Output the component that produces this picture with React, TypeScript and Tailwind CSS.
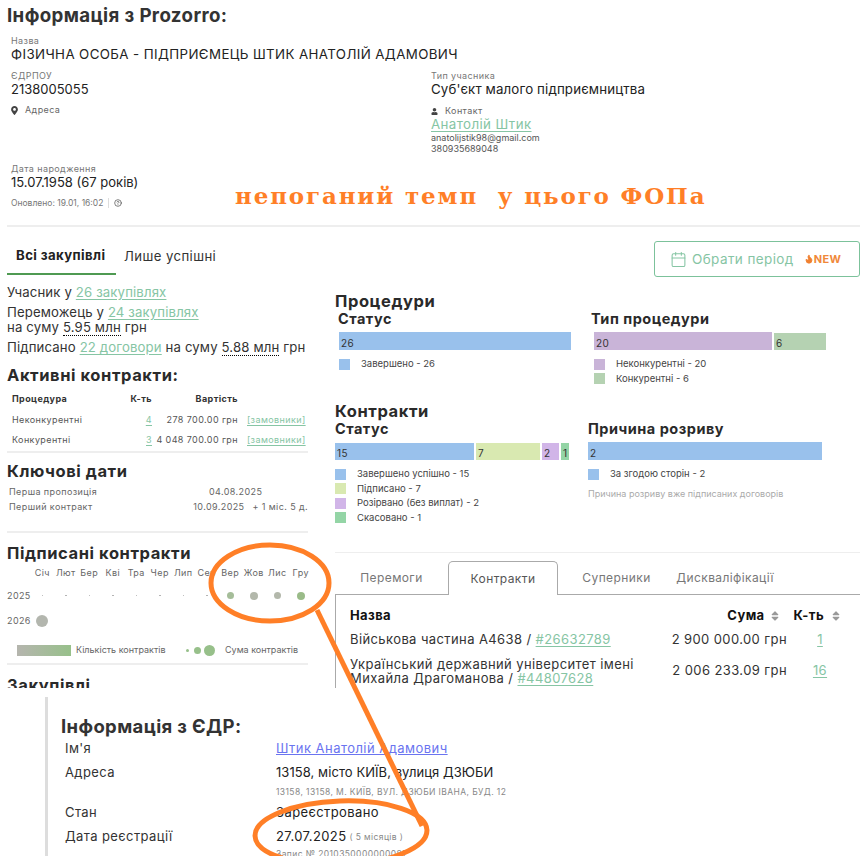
import { Calendar, CircleHelp, Flame } from "lucide-react"
import { FaMapMarkerAlt, FaUser, FaSort } from "react-icons/fa"

const linkCls = "text-[#86c5a4] underline underline-offset-2"
const h3Cls = "text-[16.5px] leading-[20px] font-bold text-[#2a2a2a] tracking-[0.035em]"
const h4Cls = "text-[14.5px] leading-[18px] font-bold text-[#2a2a2a] tracking-[0.035em]"

function Bar({ items }: { items: { n: string; w: string; c: string }[] }) {
  return (
    <div className="flex items-end gap-[2px]">
      {items.map((it, i) => (
        <div key={i} className={`${it.w} ${it.c} flex items-end pl-[2px] text-[10px] leading-[14px] text-[#333]`}>
          {it.n}
        </div>
      ))}
    </div>
  )
}

function Legend({ c, label }: { c: string; label: string }) {
  return (
    <div className="flex items-center h-[14.5px] text-[9.5px] text-[#444] tracking-normal">
      <span className={`w-[11px] h-[11px] ${c} mr-[11px]`} />
      {label}
    </div>
  )
}

const months = ["Січ", "Лют", "Бер", "Кві", "Тра", "Чер", "Лип", "Сер", "Вер", "Жов", "Лис", "Гру"]

function Dot({ s, c }: { s: string; c: string }) {
  return (
    <div className="flex items-center justify-center">
      <span className={`${s} ${c} rounded-full block`} />
    </div>
  )
}

function LeftColumn() {
  return (
    <div className="w-[301px] shrink-0 text-[#333]">
      <div className="flex h-[48px] text-[13.2px]">
        <div className="w-[109px] h-[48px] border-b-2 border-[#4f9a52] flex items-center pt-[12px] pl-[9px] font-bold text-[#222]">Всі закупівлі</div>
        <div className="h-[48px] flex items-center pt-[12px] pl-[8px] text-[#333]">Лише успішні</div>
      </div>
      <div className="mt-[10px] text-[13.2px] leading-[15px] tracking-[0.01em]">
        <p className="h-[20px]">Учасник у <a className={linkCls}>26 закупівлях</a></p>
        <p>Переможець у <a className={linkCls}>24 закупівлях</a></p>
        <p className="h-[20px]">на суму <span className="border-b border-dotted border-black">5.95 млн</span> грн</p>
        <p className="whitespace-nowrap">Підписано <a className={linkCls}>22 договори</a> на суму <span className="border-b border-dotted border-black">5.88 млн</span> грн</p>
      </div>
      <h3 className={`mt-[10px] ${h3Cls}`}>Активні контракти:</h3>
      <div className="mt-[3px] text-[9px] text-[#555] pb-[1px] border-b-2 border-[#eee]">
        <div className="flex h-[22px] items-center font-bold text-[#333]">
          <span className="w-[107px] pl-[5px]">Процедура</span>
          <span className="w-[38px] text-right">К-ть</span>
          <span className="w-[86px] text-right">Вартість</span>
        </div>
        <div className="flex h-[20px] items-center">
          <span className="w-[107px] pl-[5px]">Неконкурентні</span>
          <span className="w-[38px] text-right"><a className={linkCls}>4</a></span>
          <span className="w-[86px] text-right">278 700.00 грн</span>
          <a className={`ml-[9px] ${linkCls}`}>[замовники]</a>
        </div>
        <div className="flex h-[20px] items-center">
          <span className="w-[107px] pl-[5px]">Конкурентні</span>
          <span className="w-[38px] text-right"><a className={linkCls}>3</a></span>
          <span className="w-[86px] text-right">4 048 700.00 грн</span>
          <a className={`ml-[9px] ${linkCls}`}>[замовники]</a>
        </div>
      </div>
      <h3 className={`mt-[8px] ${h3Cls}`}>Ключові дати</h3>
      <div className="mt-[3px] text-[9px] text-[#666] pb-[17px] border-b-2 border-[#eee]">
        <div className="flex h-[15px] items-center">
          <span className="w-[202px] pl-[2px]">Перша пропозиція</span>
          <span>04.08.2025</span>
        </div>
        <div className="flex h-[15px] items-center whitespace-nowrap">
          <span className="w-[202px] pl-[2px]">Перший контракт</span>
          <span>10.09.2025</span>
          <span className="ml-[8px]">+ 1 міс. 5 д.</span>
        </div>
      </div>
      <h3 className={`mt-[10px] ${h3Cls}`}>Підписані контракти</h3>
      <div className="grid grid-cols-[23.5px_repeat(12,23.5px)] text-[9px] text-[#666]">
        <span />
        {months.map((m) => (
          <span key={m} className="h-[19px] flex items-center justify-center">{m}</span>
        ))}
        <span className="h-[27px] flex items-center">2025</span>
        {months.slice(0, 8).map((m) => (
          <Dot key={m} s="w-[1.5px] h-[1.5px]" c="bg-[#aaa]" />
        ))}
        <Dot s="w-[7px] h-[7px]" c="bg-[#a5bd99]" />
        <Dot s="w-[8px] h-[8px]" c="bg-[#b3b8ab]" />
        <Dot s="w-[7px] h-[7px]" c="bg-[#b3b8ab]" />
        <Dot s="w-[8px] h-[8px]" c="bg-[#9abb88]" />
        <span className="h-[23px] flex items-center">2026</span>
        <Dot s="w-[12px] h-[12px]" c="bg-[#b3b6ae]" />
      </div>
      <div className="mt-[11px] h-[14px] flex items-center text-[9px] text-[#666] pl-[10px] whitespace-nowrap tracking-normal">
        <span className="w-[54px] h-[11px] bg-gradient-to-r from-[#b5b5ae] to-[#97c08a] mr-[5px]" />
        <span className="w-[110px]">Кількість контрактів</span>
        <span className="w-[3px] h-[3px] rounded-full bg-[#97c08a] mr-[5px]" />
        <span className="w-[7px] h-[7px] rounded-full bg-[#97c08a] mr-[3px]" />
        <span className="w-[11px] h-[11px] rounded-full bg-[#97c08a] mr-[10px]" />
        Сума контрактів
      </div>
      <div className="mt-[6px] border-t-2 border-[#eee]" />
      <h3 className={`mt-[10px] ${h3Cls}`}>Закупівлі</h3>
    </div>
  )
}

function RightColumn() {
  return (
    <div className="flex-1 min-w-0 text-[#333]">
      <div className="flex justify-end">
        <button className="w-[206px] h-[36px] mt-[14px] border border-[#7cc29b] rounded-[3px] flex items-center pl-[15px] text-[13.5px] text-[#86c5a4] whitespace-nowrap">
          <Calendar className="w-[17px] h-[17px] mr-[5px]" strokeWidth={1.5} />
          Обрати період
          <Flame className="w-[10px] h-[10px] ml-[10px] text-[#f08030]" fill="#f08030" />
          <span className="text-[11px] font-bold text-[#f0883a]">NEW</span>
        </button>
      </div>
      <h3 className={`mt-[14px] ${h3Cls}`}>Процедури</h3>
      <div className="flex">
        <div className="w-[255px] pl-[3px]">
          <h4 className={`-mt-px ${h4Cls}`}>Статус</h4>
          <div className="mt-[4px] ml-[1px]">
            <Bar items={[{ n: "26", w: "w-[232px] h-[18px]", c: "bg-[#99c1ec]" }]} />
          </div>
          <div className="mt-[7px] ml-[1px]"><Legend c="bg-[#99c1ec]" label="Завершено - 26" /></div>
        </div>
        <div className="pl-[1px]">
          <h4 className={`-mt-px ${h4Cls}`}>Тип процедури</h4>
          <div className="mt-[4px] ml-[3px]">
            <Bar items={[
              { n: "20", w: "w-[178px] h-[18px]", c: "bg-[#c9b4d8]" },
              { n: "6", w: "w-[52px] h-[17px]", c: "bg-[#b5d2b2]" },
            ]} />
          </div>
          <div className="mt-[7px] ml-[3px]">
            <Legend c="bg-[#c9b4d8]" label="Неконкурентні - 20" />
            <Legend c="bg-[#b5d2b2]" label="Конкурентні - 6" />
          </div>
        </div>
      </div>
      <h3 className={`mt-[15px] ${h3Cls}`}>Контракти</h3>
      <div className="flex">
        <div className="w-[253px]">
          <h4 className={`-mt-px ${h4Cls}`}>Статус</h4>
          <div className="mt-[5px]">
            <Bar items={[
              { n: "15", w: "w-[139px] h-[17px]", c: "bg-[#99c1ec]" },
              { n: "7", w: "w-[64px] h-[17px]", c: "bg-[#d9e9b1]" },
              { n: "2", w: "w-[17px] h-[17px]", c: "bg-[#d1b5e8]" },
              { n: "1", w: "w-[8px] h-[17px]", c: "bg-[#94d5a6]" },
            ]} />
          </div>
          <div className="mt-[7px]">
            <Legend c="bg-[#99c1ec]" label="Завершено успішно - 15" />
            <Legend c="bg-[#d9e9b1]" label="Підписано - 7" />
            <Legend c="bg-[#d1b5e8]" label="Розірвано (без виплат) - 2" />
            <Legend c="bg-[#94d5a6]" label="Скасовано - 1" />
          </div>
        </div>
        <div>
          <h4 className={`-mt-px ${h4Cls}`}>Причина розриву</h4>
          <div className="mt-[4px]">
            <Bar items={[{ n: "2", w: "w-[234px] h-[18px]", c: "bg-[#99c1ec]" }]} />
          </div>
          <div className="mt-[7px]"><Legend c="bg-[#99c1ec]" label="За згодою сторін - 2" /></div>
          <p className="mt-[6px] text-[9px] leading-[12px] text-[#aaa] tracking-normal">Причина розриву вже підписаних договорів</p>
        </div>
      </div>
      <div className="mt-[27px] border-t border-[#eee]" />
      <div className="mt-[8px] flex text-[12px] text-[#777] h-[33px] border-b border-[#aaa] box-content">
        <div className="w-[113px] h-[33px] flex items-center justify-center">Перемоги</div>
        <div className="w-[110px] h-[34px] flex items-center justify-center bg-white border border-[#aaa] border-b-0 rounded-t-[5px] text-[#555]">Контракти</div>
        <div className="w-[117px] h-[33px] flex items-center justify-center">Суперники</div>
        <div className="w-[100px] h-[33px] flex items-center justify-center">Дискваліфікації</div>
      </div>
      <div className="border-l border-[#aaa] pl-[14px] pr-[7px] h-[100px] text-[13px] text-[#333]">
        <div className="flex h-[42px] items-center font-bold text-[#111] pr-[12px]">
          <span className="flex-1">Назва</span>
          <span className="mr-[5px]">Сума</span>
          <FaSort className="w-[10px] h-[12px] text-[#999] mr-[14px]" />
          <span className="mr-[7px]">К-ть</span>
          <FaSort className="w-[10px] h-[12px] text-[#999]" />
        </div>
        <div className="flex items-center -mt-[9px] h-[24px]">
          <span className="flex-1">Військова частина А4638 / <a className={linkCls}>#26632789</a></span>
          <span className="w-[140px] text-right whitespace-nowrap">2 900 000.00 грн</span>
          <span className="w-[66px] text-center"><a className={linkCls}>1</a></span>
        </div>
        <div className="flex items-center mt-[5px]">
          <span className="flex-1 leading-[14px] whitespace-nowrap">Український державний університет імені<br />Михайла Драгоманова / <a className={linkCls}>#44807628</a></span>
          <span className="w-[140px] text-right whitespace-nowrap">2 006 233.09 грн</span>
          <span className="w-[66px] text-center"><a className={linkCls}>16</a></span>
        </div>
      </div>
    </div>
  )
}

export default function App() {
  return (
    <div className="relative w-[865px] h-[856px] overflow-hidden bg-white font-['Inter',sans-serif] text-[#222] tracking-[0.025em]">
      <div className="h-[688px] overflow-hidden pl-[7px] pr-[5px]">
        <h2 className="pt-[5px] text-[18.7px] leading-[22px] font-bold text-[#333] tracking-[0.02em]">Інформація з Prozorro:</h2>
        <div className="border-b-2 border-[#eee] h-[200px] pt-[9px]">
          <div className="pl-[4px]">
            <div className="text-[9px] leading-[10px] text-[#777]">Назва</div>
            <div className="text-[13.3px] leading-[16px] text-[#222]">ФІЗИЧНА ОСОБА - ПІДПРИЄМЕЦЬ ШТИК АНАТОЛІЙ АДАМОВИЧ</div>
          </div>
          <div className="flex pl-[4px] mt-[9px]">
            <div className="w-[420px]">
              <div className="text-[9px] leading-[10px] text-[#777]">ЄДРПОУ</div>
              <div className="text-[13px] leading-[16px] tracking-normal">2138005055</div>
              <div className="flex items-center mt-[7px] text-[9px] leading-[12px] text-[#666]">
                <FaMapMarkerAlt className="w-[7px] h-[9px] text-[#444] mr-[7px]" />
                Адреса
              </div>
              <div className="mt-[48px] text-[9px] leading-[10px] text-[#777]">Дата народження</div>
              <div className="text-[13px] leading-[16px] tracking-normal">15.07.1958 (67 років)</div>
              <div className="flex items-center mt-[7px] text-[8.5px] leading-[12px] text-[#777] tracking-normal">
                Оновлено: 19.01, 16:02
                <span className="w-px h-[10px] bg-[#ddd] mx-[5px]" />
                <CircleHelp className="w-[8px] h-[8px] text-[#444]" />
              </div>
            </div>
            <div className="flex-1">
              <div className="text-[9px] leading-[10px] text-[#777]">Тип учасника</div>
              <div className="text-[13.3px] leading-[16px] text-[#222] tracking-[0.01em]">Суб'єкт малого підприємництва</div>
              <div className="flex items-center mt-[8px] text-[9px] leading-[12px] text-[#666]">
                <FaUser className="w-[7px] h-[7px] text-[#444] mr-[7px]" />
                Контакт
              </div>
              <a className={`block text-[13.3px] leading-[15px] ${linkCls}`}>Анатолій Штик</a>
              <div className="text-[9px] leading-[11px] text-[#555] tracking-normal">anatolijstik98@gmail.com</div>
              <div className="text-[9px] leading-[11px] text-[#555] tracking-normal">380935689048</div>
            </div>
          </div>
        </div>
        <div className="flex gap-[27px]">
          <LeftColumn />
          <RightColumn />
        </div>
      </div>
      <div className="h-[159px] ml-[45px] mt-[9px] border-l-[3px] border-[#ddd] pl-[13px] text-[13px] text-[#333]">
        <h2 className="pt-[18px] text-[18.5px] leading-[22px] font-bold text-[#333] tracking-[0.02em]">Інформація з ЄДР:</h2>
        <div className="flex h-[24px] items-center pl-[4px]">
          <span className="w-[211px]">Ім'я</span>
          <a className="text-[#6a74f0] underline tracking-[0.035em]">Штик Анатолій Адамович</a>
        </div>
        <div className="flex h-[24px] items-center pl-[4px]">
          <span className="w-[211px]">Адреса</span>
          <span className="text-[#222] tracking-[0.005em]">13158, місто КИЇВ, вулиця ДЗЮБИ</span>
        </div>
        <div className="pl-[215px] h-[16px] text-[8.5px] leading-[14px] text-[#888]">13158, 13158, М. КИЇВ, ВУЛ. ДЗЮБИ ІВАНА, БУД. 12</div>
        <div className="flex h-[24px] items-center pl-[4px]">
          <span className="w-[211px]">Стан</span>
          <span className="text-[#222]">Зареєстровано</span>
        </div>
        <div className="flex h-[24px] items-center pl-[4px]">
          <span className="w-[211px]">Дата реєстрації</span>
          <span className="text-[#222]">27.07.2025</span>
          <span className="ml-[3px] text-[8.5px] text-[#888]">( 5 місяців )</span>
        </div>
        <div className="pl-[215px] text-[8.5px] leading-[10px] text-[#888]">Запис № 2010350000000081</div>
      </div>

      {/* annotation drawn over the screenshot */}
      <div className="absolute left-[235px] top-[182px] font-['DejaVu_Serif',serif] font-bold text-[23px] leading-[28px] tracking-[0.08em] text-[#ff7f27] whitespace-pre">
        непоганий темп  у цього ФОПа
      </div>
      <svg className="absolute inset-0 w-[865px] h-[856px] pointer-events-none" viewBox="0 0 865 856" fill="none" stroke="#ff7f27">
        <ellipse cx="270" cy="583" rx="59" ry="38" strokeWidth="5" />
        <path d="M317 610 L422 826" strokeWidth="5" />
        <ellipse cx="341" cy="833" rx="86" ry="32" strokeWidth="5" transform="rotate(-2 341 833)" />
      </svg>
    </div>
  )
}
